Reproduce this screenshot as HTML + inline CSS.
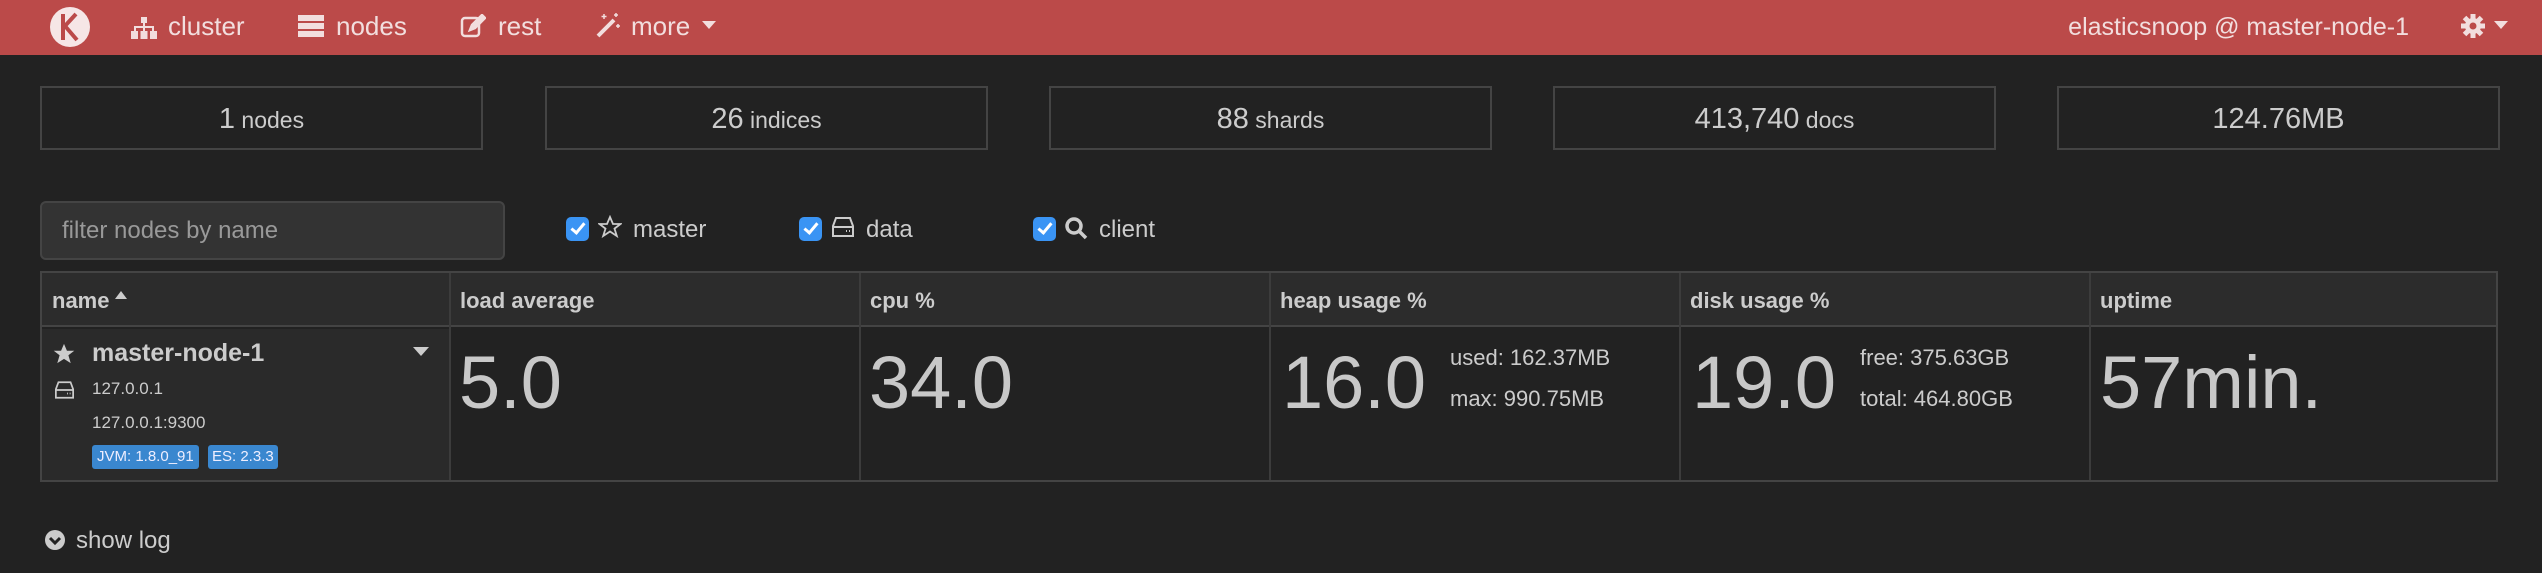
<!DOCTYPE html>
<html><head><meta charset="utf-8">
<style>
*{margin:0;padding:0;box-sizing:border-box}
body{width:2542px;height:573px;background:#222;font-family:"Liberation Sans",sans-serif;color:#ccc;position:relative;overflow:hidden}
.a{position:absolute;white-space:nowrap}
.nav{position:absolute;left:0;top:0;width:2542px;height:55px;background:#bb4a49}
.nt{position:absolute;top:11px;font-size:26px;color:#f2dede;line-height:30px}
.box{position:absolute;top:86px;height:64px;width:443px;border:2px solid #444;text-align:center;line-height:62px;font-size:23px;color:#ccc}
.box b{font-weight:normal;font-size:29px}
.cb{position:absolute;top:217px;width:23px;height:24px;background:#3a94f4;border-radius:5px}
.cb:after{content:"";position:absolute;left:8px;top:3px;width:5px;height:11px;border:solid #fff;border-width:0 3px 3px 0;transform:rotate(40deg)}
.lbl{position:absolute;top:216px;font-size:24px;color:#ccc}
.th{position:absolute;top:288px;font-size:22px;font-weight:bold;color:#ccc}
.big{position:absolute;top:343px;font-size:74px;color:#c8c8c8;line-height:80px}
.sm{position:absolute;font-size:22px;color:#ccc}
</style></head><body>
<div class="nav"></div>
<svg class="a" style="left:48px;top:5px" width="44" height="44" viewBox="0 0 44 44"><circle cx="22" cy="22" r="20" fill="#f6e6e6"/><path d="M15 9v26M16 22L28 9M17 21l12 14" stroke="#bb4a49" stroke-width="4" fill="none"/></svg>
<svg class="a" style="left:131px;top:17px" width="26" height="22" viewBox="0 0 26 22" fill="#f2dede"><rect x="10" y="0" width="6" height="6"/><rect x="12" y="6" width="2" height="4"/><rect x="3" y="9" width="20" height="2"/><rect x="3" y="9" width="2" height="5"/><rect x="21" y="9" width="2" height="5"/><rect x="12" y="9" width="2" height="5"/><rect x="0" y="14" width="7" height="8"/><rect x="9.5" y="14" width="7" height="8"/><rect x="19" y="14" width="7" height="8"/></svg>
<div class="nt" style="left:168px">cluster</div>
<svg class="a" style="left:298px;top:15px" width="26" height="22" viewBox="0 0 26 22" fill="#f2dede"><rect x="0" y="0" width="26" height="6"/><rect x="0" y="8" width="26" height="6"/><rect x="0" y="16" width="26" height="6"/></svg>
<div class="nt" style="left:336px">nodes</div>
<svg class="a" style="left:460px;top:14px" width="26" height="24" viewBox="0 0 26 24" fill="none" stroke="#f2dede" stroke-width="2.5"><rect x="2" y="4" width="17" height="18" rx="3"/><path d="M10 16l2-5 10-10 3 3-10 10z" fill="#f2dede"/></svg>
<div class="nt" style="left:498px">rest</div>
<svg class="a" style="left:594px;top:12px" width="28" height="26" viewBox="0 0 28 26"><path d="M4 24L20 8" stroke="#f2dede" stroke-width="4"/><path d="M10 2v5M7.5 4.5h5M22 1v4M20 3h4M24 12v4M22 14h4" stroke="#f2dede" stroke-width="1.5"/></svg>
<div class="nt" style="left:631px">more</div>
<svg class="a" style="left:702px;top:21px" width="14" height="9"><path d="M0 0h14L7 8z" fill="#f2dede"/></svg>
<div class="nt" style="right:133px;font-size:25px;top:12px">elasticsnoop @ master-node-1</div>
<svg class="a" style="left:2461px;top:14px" width="24" height="24" viewBox="0 0 24 24"><g fill="#f2dede"><circle cx="12" cy="12" r="8"/><rect x="9.5" y="0" width="5" height="24"/><rect x="0" y="9.5" width="24" height="5"/><rect x="9.5" y="0" width="5" height="24" transform="rotate(45 12 12)"/><rect x="9.5" y="0" width="5" height="24" transform="rotate(-45 12 12)"/></g><circle cx="12" cy="12" r="3.5" fill="#bb4a49"/></svg>
<svg class="a" style="left:2494px;top:21px" width="14" height="9"><path d="M0 0h14L7 8z" fill="#f2dede"/></svg>

<div class="box" style="left:40px"><b>1</b> nodes</div>
<div class="box" style="left:545px"><b>26</b> indices</div>
<div class="box" style="left:1049px"><b>88</b> shards</div>
<div class="box" style="left:1553px"><b>413,740</b> docs</div>
<div class="box" style="left:2057px"><b>124.76MB</b></div>

<div class="a" style="left:40px;top:201px;width:465px;height:59px;background:#333;border:2px solid #444;border-radius:6px;font-size:24px;color:#999;line-height:55px;padding-left:20px">filter nodes by name</div>
<div class="cb" style="left:566px"></div>
<svg class="a" style="left:598px;top:215px" width="24" height="24" viewBox="0 0 24 24"><path d="M12 2l3 7h7.5l-6 4.6 2.3 7.4L12 16.5 5.2 21l2.3-7.4-6-4.6H9z" fill="none" stroke="#ccc" stroke-width="1.8"/></svg>
<div class="lbl" style="left:633px">master</div>
<div class="cb" style="left:799px"></div>
<svg class="a" style="left:832px;top:217px" width="22" height="20" viewBox="0 0 22 20" fill="none" stroke="#ccc" stroke-width="2"><path d="M4 1h14l3 8v10H1V9z"/><path d="M1 10h20"/><path d="M14 14h1M17 14h1"/></svg>
<div class="lbl" style="left:866px">data</div>
<div class="cb" style="left:1033px"></div>
<svg class="a" style="left:1064px;top:216px" width="24" height="24" viewBox="0 0 24 24" fill="none" stroke="#ccc" stroke-width="3.5"><circle cx="10" cy="10" r="7"/><path d="M15 15l7 7"/></svg>
<div class="lbl" style="left:1099px">client</div>

<div class="a" style="left:40px;top:271px;width:2458px;height:211px;border:2px solid #444;background:#222"></div>
<div class="a" style="left:42px;top:273px;width:2454px;height:54px;background:#2c2c2c;border-bottom:2px solid #444"></div>
<div class="a" style="left:42px;top:329px;width:407px;height:151px;background:#2a2a2a"></div>
<div class="a" style="left:449px;top:273px;width:2px;height:207px;background:#3c3c3c"></div>
<div class="a" style="left:859px;top:273px;width:2px;height:207px;background:#3c3c3c"></div>
<div class="a" style="left:1269px;top:273px;width:2px;height:207px;background:#3c3c3c"></div>
<div class="a" style="left:1679px;top:273px;width:2px;height:207px;background:#3c3c3c"></div>
<div class="a" style="left:2089px;top:273px;width:2px;height:207px;background:#3c3c3c"></div>
<div class="th" style="left:52px">name</div>
<svg class="a" style="left:115px;top:291px" width="12" height="8"><path d="M0 8L6 0l6 8z" fill="#ccc"/></svg>
<div class="th" style="left:460px">load average</div>
<div class="th" style="left:870px">cpu %</div>
<div class="th" style="left:1280px">heap usage %</div>
<div class="th" style="left:1690px">disk usage %</div>
<div class="th" style="left:2100px">uptime</div>

<svg class="a" style="left:53px;top:343px" width="22" height="22" viewBox="0 0 24 24"><path d="M12 1l3.2 7.5h8L16.8 13.4l2.5 8.6L12 17.3 4.7 22l2.5-8.6L.8 8.5h8z" fill="#ccc"/></svg>
<div class="a" style="left:92px;top:339px;font-size:25px;font-weight:bold;color:#ccc">master-node-1</div>
<svg class="a" style="left:413px;top:347px" width="16" height="10"><path d="M0 0h16L8 9z" fill="#ccc"/></svg>
<svg class="a" style="left:55px;top:381px" width="19" height="18" viewBox="0 0 22 20" fill="none" stroke="#ccc" stroke-width="2"><path d="M4 1h14l3 8v10H1V9z"/><path d="M1 10h20"/><path d="M14 14h1M17 14h1"/></svg>
<div class="sm" style="left:92px;top:379px;font-size:17px">127.0.0.1</div>
<div class="sm" style="left:92px;top:413px;font-size:17px">127.0.0.1:9300</div>
<div class="a" style="left:92px;top:445px;height:24px;padding:0 5px;background:#3a87cf;border-radius:3px;font-size:15px;line-height:24px;color:#eef">JVM: 1.8.0_91</div>
<div class="a" style="left:208px;top:445px;height:24px;padding:0 4px;background:#3a87cf;border-radius:3px;font-size:15px;line-height:24px;color:#eef">ES: 2.3.3</div>

<div class="big" style="left:459px">5.0</div>
<div class="big" style="left:869px">34.0</div>
<div class="big" style="left:1282px">16.0</div>
<div class="sm" style="left:1450px;top:345px">used: 162.37MB</div>
<div class="sm" style="left:1450px;top:386px">max: 990.75MB</div>
<div class="big" style="left:1692px">19.0</div>
<div class="sm" style="left:1860px;top:345px">free: 375.63GB</div>
<div class="sm" style="left:1860px;top:386px">total: 464.80GB</div>
<div class="big" style="left:2100px">57min.</div>

<svg class="a" style="left:45px;top:530px" width="20" height="20" viewBox="0 0 20 20"><circle cx="10" cy="10" r="10" fill="#ccc"/><path d="M5 8l5 5 5-5" stroke="#222" stroke-width="3" fill="none"/></svg>
<div class="a" style="left:76px;top:527px;font-size:24px;color:#ccc">show log</div>
</body></html>
